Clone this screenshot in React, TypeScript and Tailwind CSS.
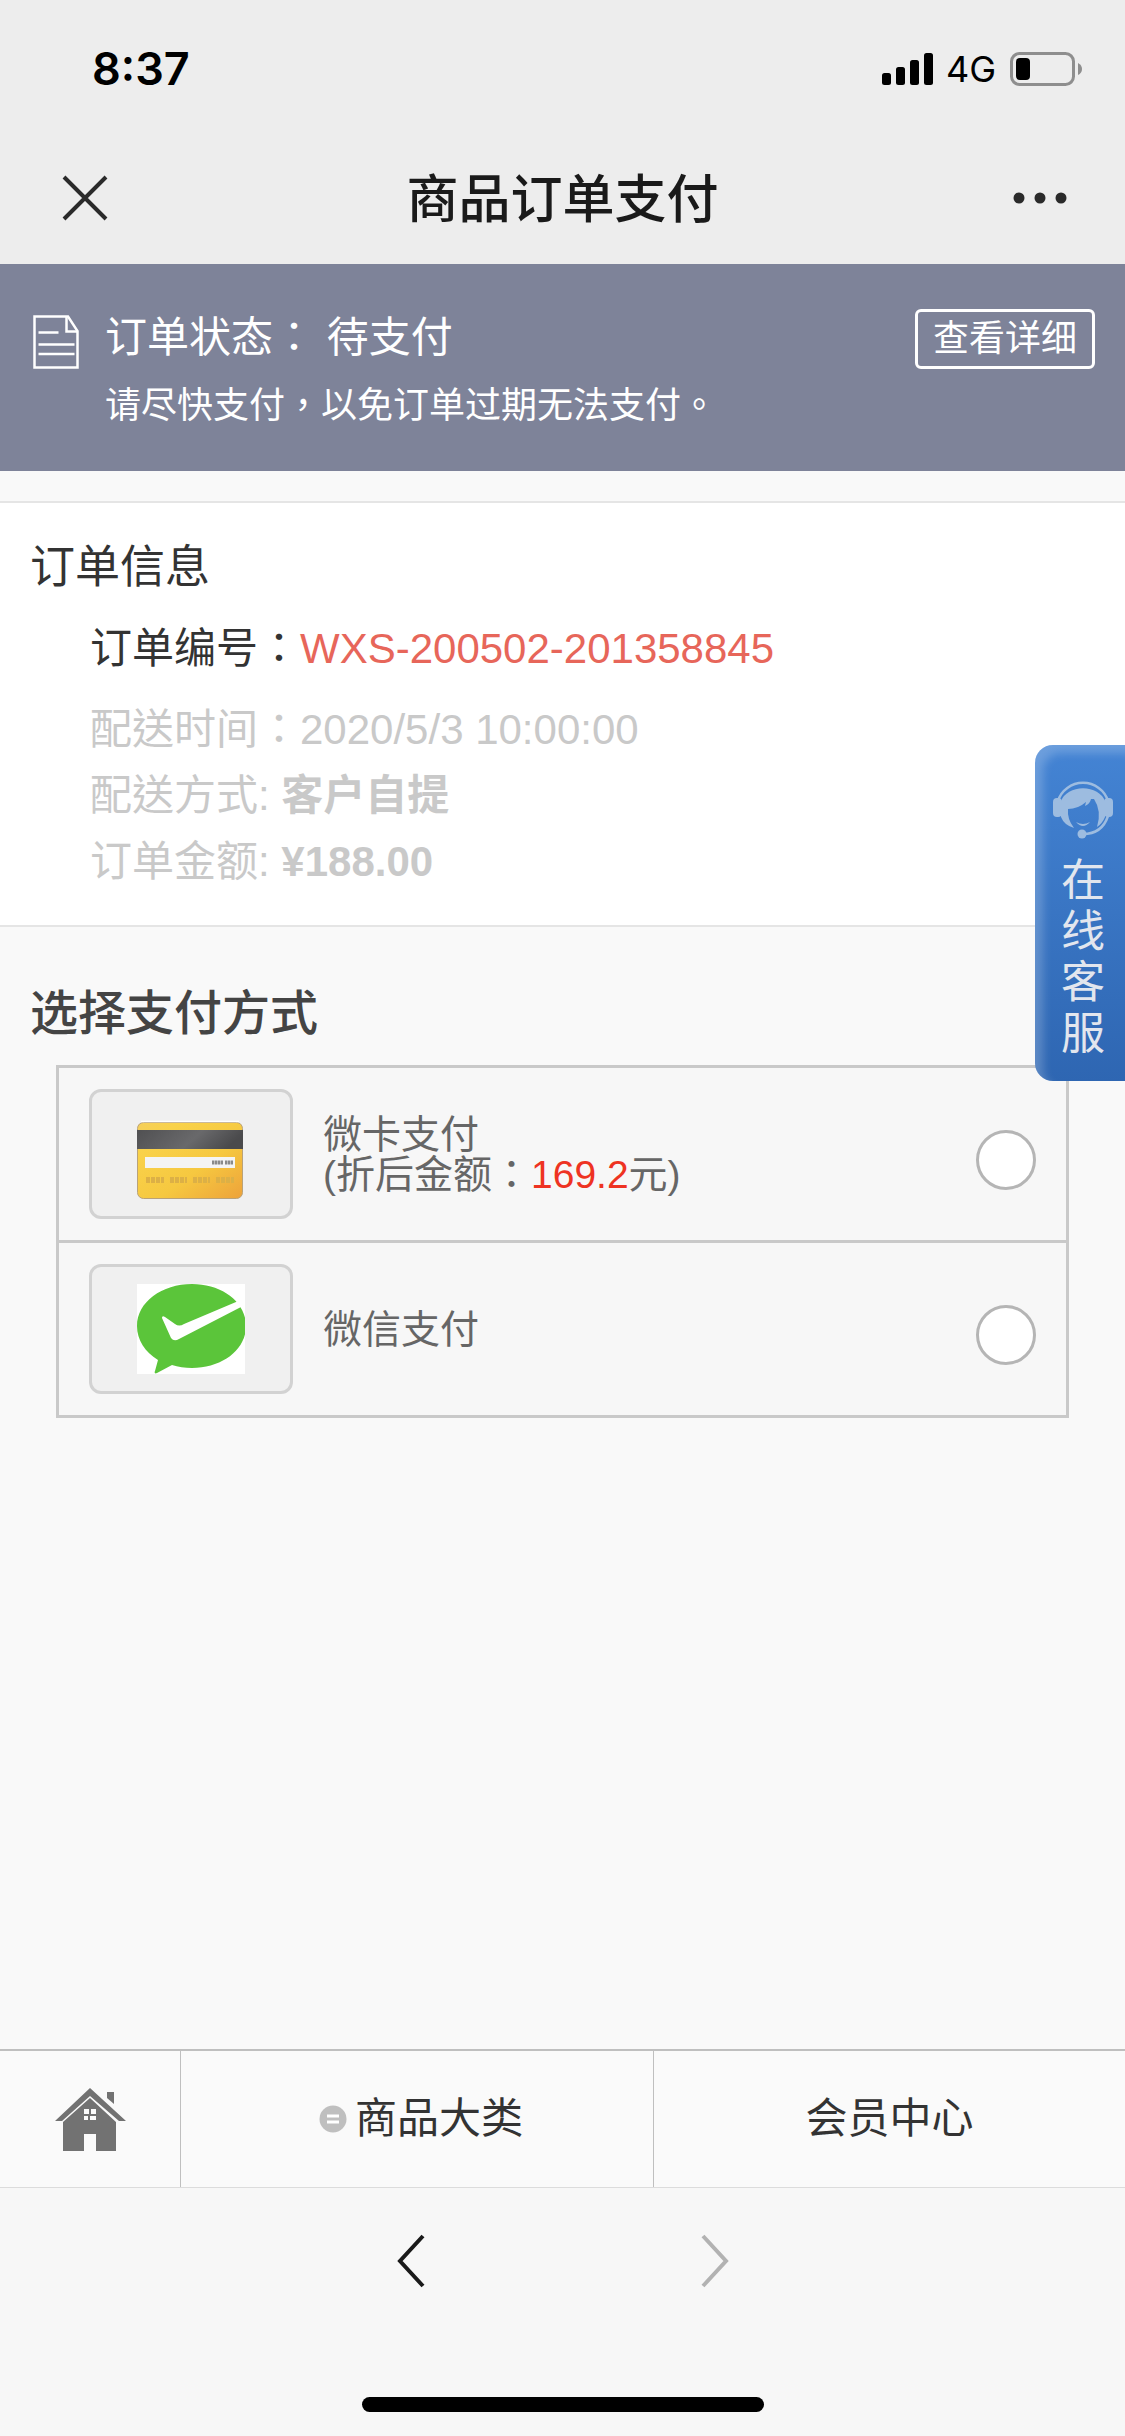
import { useState, type ReactNode } from 'react'

function StatusBar() {
  return (
    <div className="h-[132px] pl-[92px] pr-[42px] pt-[6px] flex items-center justify-between text-black">
      <div className="font-['Inter',sans-serif] font-semibold text-[45px] leading-[54px]">8:37</div>
      <div className="flex items-center gap-3">
        <svg width="52" height="34" viewBox="0 0 52 34" aria-hidden="true">
          <rect x="0" y="21" width="9" height="12" rx="2.5" />
          <rect x="14" y="15" width="9" height="18" rx="2.5" />
          <rect x="28" y="8" width="9" height="25" rx="2.5" />
          <rect x="42" y="1" width="9" height="32" rx="2.5" />
        </svg>
        <span className="font-['Inter',sans-serif] text-[36px] leading-[44px]">4G</span>
        <svg width="75" height="34" viewBox="0 0 75 34" aria-hidden="true">
          <rect x="3.5" y="1.5" width="62" height="31" rx="8" fill="none" stroke="#8e8e8e" strokeWidth="3" />
          <rect x="8" y="6" width="14" height="22" rx="4" />
          <path d="M70 11 Q74 13 74 17 T70 23 Z" fill="#8e8e8e" />
        </svg>
      </div>
    </div>
  )
}

function TitleBar() {
  return (
    <div className="h-[132px] px-[56px] grid grid-cols-[60px_1fr_60px] items-center text-[#1a1a1a]">
      <button aria-label="关闭">
        <svg width="58" height="58" viewBox="0 0 58 58" fill="none" stroke="#2a2a2a" strokeWidth="4">
          <path d="M8 8 L50 50 M50 8 L8 50" />
        </svg>
      </button>
      <h1 className="pb-1 font-['Noto_Sans_CJK_SC',sans-serif] font-medium text-[52px] leading-[60px] text-center">
        商品订单支付
      </h1>
      <button aria-label="更多" className="flex justify-end">
        <svg width="58" height="12" viewBox="0 0 58 12" fill="#2a2a2a">
          <circle cx="8" cy="6" r="5.5" />
          <circle cx="29" cy="6" r="5.5" />
          <circle cx="50" cy="6" r="5.5" />
        </svg>
      </button>
    </div>
  )
}

function StatusBanner() {
  return (
    <section className="h-[207px] bg-[#7e8399] text-white flex items-start px-[30px] pt-[45px]">
      <svg className="mt-[5px] mr-[26px] shrink-0" width="49" height="56" viewBox="0 0 49 56" fill="none" stroke="#fff" strokeWidth="2.5">
        <path d="M4.5 2.5 H38 L47.5 17 V53.5 H4.5 Z" />
        <path d="M36.5 2 V17.5 H47" />
        <path d="M8.500 18.500 H28.500 M8.500 30.500 H44.500 M8.500 40 H44.500" />
      </svg>
      <div className="flex-1 pt-[2px]">
        <h2 className="text-[42px] leading-[54px]">订单状态： 待支付</h2>
        <p className="mt-[14px] text-[36px] leading-[54px]">请尽快支付，以免订单过期无法支付。</p>
      </div>
      <button className="w-[180px] h-[60px] border-[3px] border-white rounded-md text-[36px] leading-[54px]">
        查看详细
      </button>
    </section>
  )
}

function OrderInfo() {
  return (
    <section className="mt-[30px] bg-white border-y-2 border-[#e5e5e5] h-[426px] px-[30px] pt-[35px]">
      <h2 className="text-[45px] leading-[60px] text-[#333]">订单信息</h2>
      <div className="pl-[60px] pt-[18px] text-[42px] leading-[66px] text-[#c9c9c9]">
        <div className="text-[#333] mb-[15px]">
          订单编号：<span className="text-[#e7665a]">WXS-200502-201358845</span>
        </div>
        <div>配送时间：2020/5/3 10:00:00</div>
        <div>配送方式: <b>客户自提</b></div>
        <div>订单金额: <b>¥188.00</b></div>
      </div>
    </section>
  )
}

function CardIcon() {
  return (
    <svg width="108" height="90" viewBox="0 0 108 90" aria-hidden="true">
      <defs>
        <linearGradient id="gold" x1="0" y1="0" x2="1" y2="1">
          <stop offset="0" stopColor="#f5cf5c" />
          <stop offset="0.2" stopColor="#f9d24a" />
          <stop offset="0.6" stopColor="#f6c840" />
          <stop offset="1" stopColor="#eda23a" />
        </linearGradient>
        <linearGradient id="strip" x1="0" y1="0" x2="1" y2="0.2">
          <stop offset="0" stopColor="#505052" />
          <stop offset="0.6" stopColor="#69696b" />
          <stop offset="1" stopColor="#4a4a4c" />
        </linearGradient>
      </defs>
      <rect x="0.500" y="13.500" width="105" height="76" rx="6" fill="url(#gold)" stroke="#b9a27a" />
      <path d="M4 12.500 H102" stroke="#fff" strokeWidth="1.500" />
      <rect x="0" y="21" width="106" height="19" fill="url(#strip)" />
      <rect x="8" y="48" width="90" height="11" fill="#f4f4f4" />
      <path d="M75 53.500 h11 m2 0 h8" stroke="#8a8a8a" strokeWidth="4" strokeDasharray="2.500 0.500" />
      <path d="M9 71 h18 m6 0 h17 m6 0 h17 m6 0 h18" stroke="#dcb046" strokeWidth="6" strokeDasharray="4 1" />
    </svg>
  )
}

function WechatPayIcon() {
  return (
    <svg width="108" height="90" viewBox="0 0 108 90" aria-hidden="true">
      <rect width="108" height="90" fill="#fff" />
      <path d="M55 0 C85 0 109 18 109 42 C109 66 85 84 55 84 C48 84 41 83 35 81 L20 89 C18 90 17 89 18 87 L21 76 C8 68 0 56 0 42 C0 18 25 0 55 0 Z" fill="#5bc53a" />
      <path d="M25 34 Q25 31 28 33 L38 40 Q42 43 47 40 L99 18 L108 11 L104 23 L42 55 Q37 58 34 54 Z" fill="#fff" />
    </svg>
  )
}

type PayOptionProps = {
  id: string
  value: string
  onChange: (id: string) => void
  icon: ReactNode
  children: ReactNode
}

function PayOption({ id, value, onChange, icon, children }: PayOptionProps) {
  return (
    <label htmlFor={id} className="flex items-center px-[30px] py-[21px] border-b-[3px] border-[#c9c9c9] last:border-b-0 cursor-pointer">
      <span className="w-[204px] h-[130px] mr-[30px] flex items-center justify-center bg-[#f0f0f0] border-[3px] border-[#d2d2d2] rounded-xl">
        {icon}
      </span>
      <span className="flex-1 pt-[2px] text-[39px] leading-[40px] text-[#666]">{children}</span>
      <input
        type="radio"
        name="pay"
        id={id}
        checked={value === id}
        onChange={() => onChange(id)}
        className="appearance-none mt-3 w-[60px] h-[60px] rounded-full border-[3px] border-[#b5b5b5] bg-white checked:border-[18px] checked:border-[#5bc53a]"
      />
    </label>
  )
}

function PayMethods() {
  const [method, setMethod] = useState('')
  return (
    <section className="pt-[57px]">
      <h2 className="pl-[30px] text-[48px] leading-[60px] font-medium text-[#444]">选择支付方式</h2>
      <div className="mx-[56px] mt-[21px] border-[3px] border-[#c9c9c9] bg-[#f7f7f7]">
        <PayOption id="card" value={method} onChange={setMethod} icon={<CardIcon />}>
          微卡支付
          <br />
          (折后金额：<span className="text-[#ee3322]">169.2</span>元)
        </PayOption>
        <PayOption id="wechat" value={method} onChange={setMethod} icon={<WechatPayIcon />}>
          微信支付
        </PayOption>
      </div>
    </section>
  )
}

function ServiceTab() {
  return (
    <button className="absolute right-0 top-[745px] w-[90px] h-[336px] pl-[6px] rounded-l-[18px] bg-linear-to-b from-[#4484d4] to-[#2e66b2] shadow-[inset_8px_8px_10px_rgba(255,255,255,0.22)] flex flex-col items-center text-[#e2e6ee] text-[44px] leading-[51px]">
      <svg className="mt-[32px] mb-[16px] shrink-0" width="62" height="62" viewBox="0 0 62 62" fill="#9dbce0" aria-hidden="true">
        <path d="M6 24 A26 25 0 0 1 56 24" fill="none" stroke="#9dbce0" strokeWidth="2.500" />
        <rect x="1" y="21" width="9" height="19" rx="4" />
        <rect x="52" y="21" width="9" height="19" rx="4" />
        <path d="M9 24 A23 18 0 0 1 53 24 L53 40 Q50 47 45 50 Q50 34 42 22 L39 22 Q38 27 33 29 L34 25 Q26 32 16 32 Q15 42 22 51 Q12 48 9 40 Z" />
        <path d="M24 45 Q31 49 38 45 Q31 53 24 45 Z" />
        <path d="M56 39 Q50 57 31 57" fill="none" stroke="#9dbce0" strokeWidth="2.500" />
        <circle cx="30" cy="57" r="4.500" />
      </svg>
      <span>在</span>
      <span>线</span>
      <span>客</span>
      <span>服</span>
    </button>
  )
}

function BottomNav() {
  return (
    <nav className="grid grid-cols-[181px_473fr_471fr] h-[139px] bg-[#fafafa] border-t-2 border-b border-t-[#bfbfbf] border-b-[#dcdcdc] text-[42px] leading-[60px] text-[#333]">
      <a href="#home" aria-label="首页" className="flex items-center justify-center border-r border-[#bfbfbf]">
        <svg width="72" height="64" viewBox="0 0 72 64" fill="#727272">
          <path d="M1 34 L36 1 L72 34 H65 L36 9 L8 34 Z" />
          <path d="M53 5 H60 V17 L53 11 Z" />
          <path d="M9 35 L36 11 L62 35 V64 H42 V47 H30 V64 H9 Z" />
          <path d="M30 22 h5 v5 h-5 Z M37 22 h5 v5 h-5 Z M30 29 h4 v4 h-4 Z M36 29 h6 v4 h-6 Z" fill="#fafafa" />
        </svg>
      </a>
      <a href="#category" className="flex items-center justify-center gap-2 border-r border-[#bfbfbf] pl-2">
        <svg width="28" height="28" viewBox="0 0 28 28">
          <circle cx="14" cy="14" r="13.500" fill="#bfbfbf" />
          <path d="M8 11 H20 M8 17 H20" stroke="#fff" strokeWidth="3" />
        </svg>
        商品大类
      </a>
      <a href="#member" className="flex items-center justify-center">会员中心</a>
    </nav>
  )
}

function BrowserBar() {
  return (
    <footer className="h-[248px] bg-[#f7f7f7] flex flex-col items-center justify-between pt-[45px] pb-6">
      <div className="flex gap-[266px]">
        <button aria-label="后退">
          <svg width="36" height="56" viewBox="0 0 36 56" fill="none" stroke="#1a1a1a" strokeWidth="4">
            <path d="M29 3 L6 28 L29 53" />
          </svg>
        </button>
        <button aria-label="前进" disabled>
          <svg width="36" height="56" viewBox="0 0 36 56" fill="none" stroke="#b2b2b2" strokeWidth="4">
            <path d="M7 3 L30 28 L7 53" />
          </svg>
        </button>
      </div>
      <div className="w-[402px] h-[15px] rounded-full bg-black" />
    </footer>
  )
}

export default function App() {
  return (
    <div className="relative min-h-screen flex flex-col bg-[#f9f9f9] font-['Liberation_Sans','Noto_Sans_CJK_TC',sans-serif]">
      <header className="bg-[#ededed]">
        <StatusBar />
        <TitleBar />
      </header>
      <main className="flex-1">
        <StatusBanner />
        <OrderInfo />
        <PayMethods />
      </main>
      <BottomNav />
      <BrowserBar />
      <ServiceTab />
    </div>
  )
}
